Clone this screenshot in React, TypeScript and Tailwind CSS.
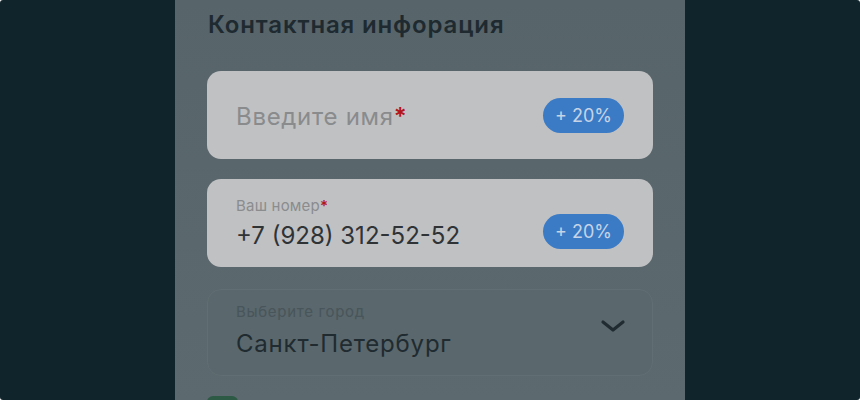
export default function App() {
  const font = { fontFamily: "Inter, 'Noto Sans', sans-serif" };
  return (
    <div className="w-[860px] h-[400px] overflow-hidden bg-white">
      <div
        className="w-full h-full rounded-[3px] bg-[#10252b] flex justify-center overflow-hidden"
        style={font}
      >
        <div className="w-[510px] h-full bg-gradient-to-b from-[#57646a] to-[#5c696e] px-8 pt-[10px]">
          <h2 className="text-[24px] leading-[30px] font-semibold tracking-[0.85px] text-[#1e2a30] pl-px">
            Контактная инфорация
          </h2>

          <div className="mt-[31px] h-[88px] rounded-[14px] bg-[#c0c1c3] pl-[29px] pr-[29px] flex items-center justify-between">
            <span className="text-[24px] leading-[30px] tracking-[0.7px] text-[#898b8d] pt-[3px]">
              Введите имя<span className="text-[#b3161a] font-semibold">*</span>
            </span>
            <Badge />
          </div>

          <div className="mt-5 h-[88px] rounded-[14px] bg-[#c0c1c3] pl-[29px] pr-[29px] flex items-center justify-between">
            <div className="flex flex-col pt-[2px]">
              <span className="text-[15px] leading-[18px] tracking-[0.2px] text-[#8a8c8e]">
                Ваш номер<span className="text-[#b3161a] font-semibold">*</span>
              </span>
              <span className="text-[24px] leading-[30px] text-[#2f3336] mt-[6px]">
                +7 (928) 312-52-52
              </span>
            </div>
            <div className="mt-4">
              <Badge />
            </div>
          </div>

          <div className="mt-[22px] h-[87px] rounded-[14px] bg-[#5a676c] border border-[#616e73] pl-[28px] pr-[23px] flex items-center justify-between">
            <div className="flex flex-col pb-[3px]">
              <span className="text-[15px] leading-[18px] tracking-[0.7px] text-[#48555a]">Выберите город</span>
              <span className="text-[24px] leading-[30px] tracking-[0.8px] text-[#1f2b30] mt-[8px]">
                Санкт-Петербург
              </span>
            </div>
            <svg width="32" height="32" viewBox="0 0 24 24" fill="none" stroke="#1f2b30" strokeWidth="2.4" strokeLinecap="round" strokeLinejoin="round" className="mb-[14px]">
              <path d="M4.5 9l7.5 6 7.5-6" />
            </svg>
          </div>

          <div className="mt-5 w-[31px] h-[31px] rounded-md bg-[#2c5a44]" />
        </div>
      </div>
    </div>
  );
}

function Badge() {
  return (
    <span className="block w-[81px] h-[35px] rounded-full bg-[#3b7bc6] text-[#c6d4e6] text-[18px] leading-[35px] text-center">
      + 20%
    </span>
  );
}
